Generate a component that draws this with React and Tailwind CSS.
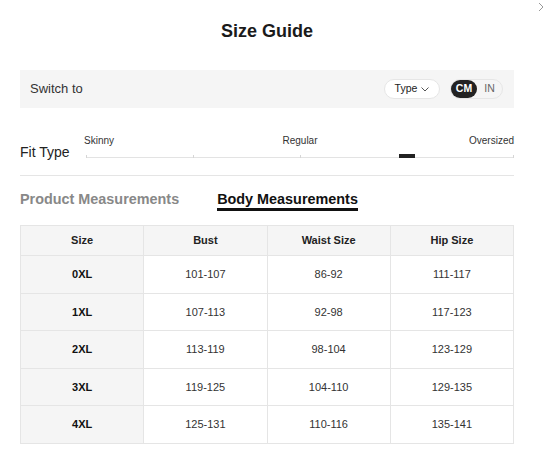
import React from "react";

const rows = [
  ["0XL", "101-107", "86-92", "111-117"],
  ["1XL", "107-113", "92-98", "117-123"],
  ["2XL", "113-119", "98-104", "123-129"],
  ["3XL", "119-125", "104-110", "129-135"],
  ["4XL", "125-131", "110-116", "135-141"],
];

export default function App() {
  return (
    <div className="relative w-[543px] h-[452px] overflow-hidden bg-white font-['Liberation_Sans',Arial,sans-serif] text-[#222]">
      <svg className="absolute left-[538px] top-[2px]" width="10" height="10" viewBox="0 0 10 10">
        <path d="M1 1 L9 9 M9 1 L1 9" stroke="#999" strokeWidth="1" fill="none" />
      </svg>
      <div className="pl-[20px] pr-[29px]">
        <h1 className="pt-[20px] text-center text-[18px] font-bold leading-[22px] text-[#1a1a1a]">Size Guide</h1>

        <div className="mt-[28px] h-[38px] bg-[#f5f5f5] flex items-center justify-between pl-[10px] pr-[11px]">
          <span className="text-[13px] text-[#333]">Switch to</span>
          <div className="flex items-center gap-[10px]">
            <div className="w-[56px] h-[20px] rounded-full bg-white border border-[#e6e6e6] flex items-center justify-center gap-[4px] text-[10.5px] text-[#222]">
              <span>Type</span>
              <svg width="8" height="5" viewBox="0 0 8 5">
                <path d="M0.5 0.5 L4 4 L7.5 0.5" stroke="#555" strokeWidth="1" fill="none" />
              </svg>
            </div>
            <div className="w-[53px] h-[20px] rounded-full bg-[#f5f5f5] border border-[#e6e6e6] flex items-center">
              <div className="w-[26px] h-[18px] rounded-full bg-[#222] text-white text-[10.5px] font-bold flex items-center justify-center">CM</div>
              <div className="flex-1 text-center text-[10.5px] text-[#666]">IN</div>
            </div>
          </div>
        </div>

        <div className="mt-[27px] h-[41px] border-b border-[#e5e5e5] flex">
          <div className="w-[66px] mt-[9px] text-[14px] leading-[16px] text-[#222]">Fit Type</div>
          <div className="flex-1">
            <div className="grid grid-cols-3 h-[14px] text-[10px] leading-[12px] text-[#333]">
              <span className="text-left -ml-[2px]">Skinny</span>
              <span className="text-center">Regular</span>
              <span className="text-right">Oversized</span>
            </div>
            <div className="relative h-[9px]">
              <div className="absolute left-0 right-0 bottom-0 h-[1px] bg-[#e3e3e3]" />
              <div className="absolute left-0 bottom-0 w-[1px] h-[3px] bg-[#d6d6d6]" />
              <div className="absolute left-1/4 bottom-0 w-[1px] h-[3px] bg-[#d6d6d6]" />
              <div className="absolute left-1/2 bottom-0 w-[1px] h-[3px] bg-[#d6d6d6]" />
              <div className="absolute right-0 bottom-0 w-[1px] h-[3px] bg-[#d6d6d6]" />
              <div className="absolute left-3/4 -translate-x-1/2 bottom-0 w-[16px] h-[4px] bg-[#222]" />
            </div>
          </div>
        </div>

        <div className="mt-[15px] flex items-start gap-[38px] text-[14.4px] font-bold leading-[17px]">
          <span className="text-[#888]">Product Measurements</span>
          <span className="text-[#111] border-b-[3px] border-[#111]">Body Measurements</span>
        </div>

        <table className="mt-[14px] w-full table-fixed border-collapse text-[11px] text-center">
          <thead>
            <tr className="h-[30px] bg-[#f5f5f5]">
              {["Size", "Bust", "Waist Size", "Hip Size"].map((h) => (
                <th key={h} className="border border-[#e5e5e5] font-bold text-[#222]">{h}</th>
              ))}
            </tr>
          </thead>
          <tbody>
            {rows.map((r) => (
              <tr key={r[0]} className="h-[37.6px]">
                <td className="border border-[#e5e5e5] bg-[#f5f5f5] font-bold text-[#111]">{r[0]}</td>
                <td className="border border-[#e5e5e5] text-[#333]">{r[1]}</td>
                <td className="border border-[#e5e5e5] text-[#333]">{r[2]}</td>
                <td className="border border-[#e5e5e5] text-[#333]">{r[3]}</td>
              </tr>
            ))}
          </tbody>
        </table>
      </div>
    </div>
  );
}
